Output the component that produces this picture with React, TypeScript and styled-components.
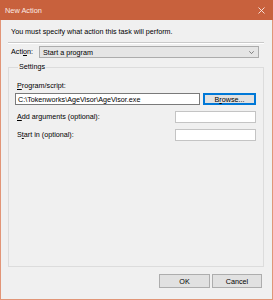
import React from 'react'
import styled, { createGlobalStyle } from 'styled-components'

const GlobalStyle = createGlobalStyle`
  html, body {
    margin: 0;
    padding: 0;
    background: #ffffff;
  }
  body {
    font-family: "Liberation Sans", Arial, sans-serif;
    font-size: 7.2px;
    color: #000;
  }
`

// outer dialog frame
const Window = styled.div`
  width: 273px;
  height: 300px;
  box-sizing: border-box;
  border: 1px solid #e29577;
  border-top: none;
  background: #f0f0f0;
  display: flex;
  flex-direction: column;
`

const TitleBar = styled.div`
  height: 20px;
  margin: 0 -1px;
  background: #c8613d;
  color: #fbeae4;
  display: flex;
  align-items: center;
  justify-content: space-between;
  padding: 0 8px 0 5px;
  font-size: 7.4px;
`

const CloseIcon = styled.svg`
  width: 7px;
  height: 7px;
  display: block;
`

const Body = styled.div`
  flex: 1;
  display: flex;
  flex-direction: column;
  padding: 0 8px 0 7px;
`

const Message = styled.div`
  margin: 7px 0 0 3px;
  line-height: 10px;
`

const Separator = styled.div`
  margin-top: 5px;
  height: 0;
  border-top: 1px solid #c9c9c9;
  border-bottom: 1px solid #ffffff;
`

const ActionRow = styled.div`
  margin-top: 2px;
  display: flex;
  align-items: center;
  padding-left: 3px;
`

const ActionLabel = styled.span`
  width: 28px;
  line-height: 10px;
`

const Combo = styled.div`
  flex: 1;
  margin-right: 5px;
  height: 12px;
  box-sizing: border-box;
  border: 1px solid #acacac;
  background: #e5e5e5;
  display: flex;
  align-items: center;
  justify-content: space-between;
  padding: 0 4px 0 3px;
`

const Chevron = styled.svg`
  width: 5px;
  height: 3px;
  display: block;
`

const Group = styled.fieldset`
  margin: 4px 0 0 0;
  padding: 0 7px 0 6px;
  height: 205px;
  box-sizing: border-box;
  border: 1px solid #dcdcdc;
  min-width: 0;
`

const Legend = styled.legend`
  margin-left: 3px;
  padding: 0 1px;
  line-height: 10px;
`

const FieldLabel = styled.div`
  margin: 9px 0 0 2px;
  line-height: 10px;
`

const Row = styled.div<{ $top: number }>`
  margin-top: ${p => p.$top}px;
  display: flex;
  align-items: center;
  gap: 3px;
`

const RowLabel = styled.span`
  flex: 1;
  margin-left: 2px;
  line-height: 10px;
`

const TextBox = styled.div<{ $w: number; $dark?: boolean }>`
  width: ${p => p.$w}px;
  height: 12px;
  box-sizing: border-box;
  border: 1px solid ${p => (p.$dark ? '#7a7a7a' : '#c4c4c4')};
  background: #ffffff;
  display: flex;
  align-items: center;
  padding-left: 2px;
  white-space: nowrap;
  overflow: hidden;
`

const Button = styled.div<{ $w: number; $focus?: boolean }>`
  width: ${p => p.$w}px;
  height: ${p => (p.$focus ? 12 : 14)}px;
  box-sizing: border-box;
  border: 1px solid ${p => (p.$focus ? '#0078d7' : '#adadad')};
  background: #e1e1e1;
  display: flex;
  align-items: center;
  justify-content: center;
  ${p => (p.$focus ? 'box-shadow: inset 0 0 0 1px #0078d7;' : '')}
`

const Footer = styled.div`
  margin-top: 7px;
  display: flex;
  justify-content: flex-end;
  gap: 2px;
  padding-right: 2px;
`

const U = styled.span`
  text-decoration: underline;
`

export default function App() {
  return (
    <>
      <GlobalStyle />
      <Window>
        <TitleBar>
          <span>New Action</span>
          <CloseIcon viewBox="0 0 7 7">
            <path d="M0.5 0.5 L6.5 6.5 M6.5 0.5 L0.5 6.5" stroke="#fbeae4" strokeWidth="0.9" />
          </CloseIcon>
        </TitleBar>
        <Body>
          <Message>You must specify what action this task will perform.</Message>
          <Separator />
          <ActionRow>
            <ActionLabel>Acti<U>o</U>n:</ActionLabel>
            <Combo>
              <span>Start a program</span>
              <Chevron viewBox="0 0 5 3">
                <path d="M0.3 0.3 L2.5 2.6 L4.7 0.3" stroke="#555" strokeWidth="0.7" fill="none" />
              </Chevron>
            </Combo>
          </ActionRow>
          <Group>
            <Legend>Settings</Legend>
            <FieldLabel><U>P</U>rogram/script:</FieldLabel>
            <Row $top={2}>
              <TextBox $w={185} $dark>C:\Tokenworks\AgeVisor\AgeVisor.exe</TextBox>
              <Button $w={53} $focus>B<U>r</U>owse...</Button>
            </Row>
            <Row $top={6}>
              <RowLabel><U>A</U>dd arguments (optional):</RowLabel>
              <TextBox $w={81} />
            </Row>
            <Row $top={6}>
              <RowLabel>S<U>t</U>art in (optional):</RowLabel>
              <TextBox $w={81} />
            </Row>
          </Group>
          <Footer>
            <Button $w={51}>OK</Button>
            <Button $w={50}>Cancel</Button>
          </Footer>
        </Body>
      </Window>
    </>
  )
}
